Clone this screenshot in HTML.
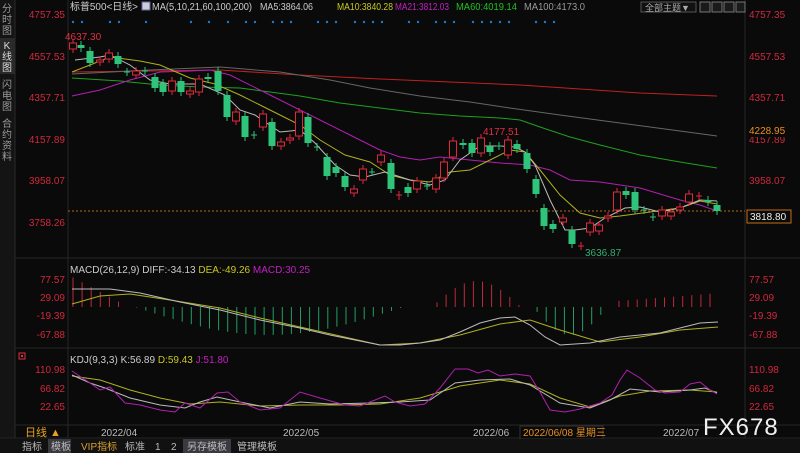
<!DOCTYPE html>
<html><head><meta charset="utf-8"><style>
html,body{margin:0;padding:0;background:#0a0a0a;}
body{width:800px;height:453px;overflow:hidden;position:relative;font-family:"Liberation Sans","Noto Sans CJK SC",sans-serif;}
svg{position:absolute;left:0;top:0;}
</style></head><body>
<svg id="s" width="800" height="453" xmlns="http://www.w3.org/2000/svg" font-family="Liberation Sans, Noto Sans CJK SC, sans-serif">
<rect width="800" height="453" fill="#0a0a0a"/>
<rect x="0" y="0" width="15" height="438" fill="#141414"/>
<rect x="0" y="38" width="15" height="36" fill="#2a2a2a"/>
<line x1="15" y1="0" x2="15" y2="438" stroke="#2a2a2a"/>
<g fill="#9a9a9a" font-size="10" text-anchor="middle">
<text x="7" y="12">分</text><text x="7" y="23">时</text><text x="7" y="34">图</text>
<text x="7" y="49" fill="#ddd">K</text><text x="7" y="60" fill="#ddd">线</text><text x="7" y="71" fill="#ddd">图</text>
<text x="7" y="88">闪</text><text x="7" y="99">电</text><text x="7" y="110">图</text>
<text x="7" y="127">合</text><text x="7" y="138">约</text><text x="7" y="149">资</text><text x="7" y="160">料</text>
</g>
<g stroke="#262626">
<line x1="68" y1="0" x2="68" y2="438"/>
<line x1="745" y1="0" x2="745" y2="438"/>
<line x1="15" y1="258" x2="800" y2="258"/>
<line x1="15" y1="348" x2="800" y2="348"/>
<line x1="15" y1="425" x2="800" y2="425"/>
<line x1="0" y1="438" x2="800" y2="438"/>
</g>
<g font-size="10">
<text x="70" y="10" fill="#ccc" textLength="68" lengthAdjust="spacingAndGlyphs">标普500&lt;日线&gt;</text>
<rect x="142" y="2" width="8" height="8" fill="#ccd" stroke="#669"/>
<text x="152" y="10" fill="#ccc" textLength="100" lengthAdjust="spacingAndGlyphs">MA(5,10,21,60,100,200)</text>
<text x="260" y="10" fill="#ccc" textLength="53" lengthAdjust="spacingAndGlyphs">MA5:3864.06</text>
<text x="337" y="10" fill="#c8c820" textLength="56" lengthAdjust="spacingAndGlyphs">MA10:3840.28</text>
<text x="395" y="10" fill="#c020c0" textLength="54" lengthAdjust="spacingAndGlyphs">MA21:3812.03</text>
<text x="456" y="10" fill="#20c020" textLength="61" lengthAdjust="spacingAndGlyphs">MA60:4019.14</text>
<text x="524" y="10" fill="#999" textLength="61" lengthAdjust="spacingAndGlyphs">MA100:4173.0</text>
</g>
<rect x="641" y="2" width="55" height="10" fill="#111" stroke="#555"/>
<text x="645" y="11" font-size="9" fill="#aaa">全部主题▼</text>
<g stroke="#777" fill="#1a1a1a"><rect x="700" y="2" width="10" height="10"/><rect x="712" y="2" width="10" height="10"/><rect x="724" y="2" width="10" height="10"/><rect x="736" y="2" width="9" height="10"/></g>
<g font-size="10" fill="#d0283c" text-anchor="end">
<text x="65" y="18">4757.35</text><text x="65" y="60">4557.53</text><text x="65" y="101">4357.71</text><text x="65" y="143">4157.89</text><text x="65" y="184">3958.07</text><text x="65" y="226">3758.26</text>
<text x="65" y="283">77.57</text><text x="65" y="301">29.09</text><text x="65" y="319">-19.39</text><text x="65" y="338">-67.88</text>
<text x="65" y="373">110.98</text><text x="65" y="392">66.82</text><text x="65" y="410">22.65</text>
</g>
<g font-size="10" fill="#d0283c">
<text x="749" y="18">4757.35</text><text x="749" y="60">4557.53</text><text x="749" y="101">4357.71</text><text x="749" y="143">4157.89</text><text x="749" y="184">3958.07</text>
<text x="749" y="283">77.57</text><text x="749" y="301">29.09</text><text x="749" y="319">-19.39</text><text x="749" y="338">-67.88</text>
<text x="749" y="373">110.98</text><text x="749" y="392">66.82</text><text x="749" y="410">22.65</text>
</g>
<rect x="747" y="124" width="44" height="13" fill="#0a0a0a"/>
<text x="749" y="134" font-size="10" fill="#e89020">4228.95</text>
<rect x="747" y="210" width="44" height="13" fill="#0a0a0a" stroke="#c07018"/>
<text x="750" y="220" font-size="10" fill="#f0f0f0">3818.80</text>
<line x1="68" y1="211" x2="745" y2="211" stroke="#b06818" stroke-dasharray="2,2"/>
<g id="dots" fill="#1e7ad0"></g>
<g id="ma" fill="none" stroke-width="1"></g>
<g id="cdl"></g>
<text x="65" y="40" font-size="10" fill="#e03040">4637.30</text>
<text x="483" y="135" font-size="10" fill="#e03040">4177.51</text>
<text x="585" y="256" font-size="10" fill="#30b070">3636.87</text>
<text x="70" y="273" font-size="10" fill="#ccc">MACD(26,12,9) DIFF:-34.13 <tspan fill="#c8c820">DEA:-49.26</tspan> <tspan fill="#c020c0">MACD:30.25</tspan></text>
<g id="macd"></g>
<rect x="19" y="353" width="6" height="6" fill="none" stroke="#e03040"/><rect x="21" y="355" width="2" height="2" fill="#e03040"/>
<text x="70" y="363" font-size="10" fill="#ccc">KDJ(9,3,3) K:56.89 <tspan fill="#c8c820">D:59.43</tspan> <tspan fill="#c020c0">J:51.80</tspan></text>
<g id="kdj" fill="none"></g>
<text x="25" y="436" font-size="11" fill="#e8a020">日线 ▲</text>
<g font-size="10" fill="#bbb"><text x="101" y="436">2022/04</text><text x="283" y="436">2022/05</text><text x="473" y="436">2022/06</text><text x="663" y="436">2022/07</text></g>
<rect x="520" y="426" width="83" height="13" fill="#0a0a0a" stroke="#333"/>
<text x="523" y="436" font-size="10" fill="#e89020">2022/06/08 星期三</text>
<text x="703" y="435" font-size="24" fill="#f0f0f0" letter-spacing="1">FX678</text>
<rect x="0" y="439" width="800" height="14" fill="#111"/>
<rect x="48" y="439" width="23" height="14" fill="#3a3a40"/>
<rect x="183" y="439" width="48" height="14" fill="#3a3a40"/>
<g font-size="10" fill="#bbb"><text x="22" y="450">指标</text><text x="51" y="450">模板</text><text x="81" y="450" fill="#d8a030">VIP指标</text><text x="125" y="450">标准</text><text x="155" y="450">1</text><text x="171" y="450">2</text><text x="187" y="450">另存模板</text><text x="237" y="450">管理模板</text></g>
</svg>
<script>
var NS="http://www.w3.org/2000/svg";
function el(p,t,a){var e=document.createElementNS(NS,t);for(var k in a)e.setAttribute(k,a[k]);document.getElementById(p).appendChild(e);return e;}
[73,82,110,119,146,191,209,228,246,255,273,282,291,318,327,336,355,364,373,382,409,418,436,445,454,473,482,491,500,509,536,545,554].forEach(function(x){el("dots","circle",{cx:x,cy:22,r:1.2});});
function pl(g,c,pts,w){el(g,"polyline",{points:pts,stroke:c,"stroke-width":w||1,fill:"none"});}
pl("ma","#c02020","72,72 150,71 220,70 300,75 380,79 450,82 520,85 580,89 640,93 717,96");
pl("ma","#666","72,74 150,70 220,67 280,72 330,80 370,88 420,96 470,102 510,108 560,115 620,123 680,131 717,136");
pl("ma","#20a020","72,78 120,81 160,85 200,87 240,88 300,96 340,103 380,108 420,113 460,116 500,118 520,120 540,127 570,137 600,145 640,155 680,162 717,168");
pl("ma","#b020b0","72,96 100,90 130,80 160,72 190,71 210,70 230,75 260,90 290,105 320,120 350,135 380,150 400,157 420,160 440,157 470,160 500,163 530,165 550,170 570,180 600,182 640,188 680,200 700,205 717,211");
pl("ma","#b0b020","72,72 90,65 110,57 140,61 160,65 190,78 215,84 240,95 260,105 280,115 300,125 320,140 345,155 370,162 390,175 410,180 430,182 450,172 470,170 490,160 510,150 525,152 540,170 560,195 580,213 600,218 620,216 650,212 680,208 700,201 717,204");
pl("ma","#bbb","75,60 100,57 110,55 130,65 150,80 170,84 200,84 225,95 240,110 255,115 265,122 280,132 300,130 315,143 335,165 350,175 365,177 385,172 410,180 430,185 445,180 460,160 480,146 500,146 515,147 525,152 535,165 550,200 565,230 575,230 590,228 605,218 625,208 640,207 660,212 680,208 700,200 717,201");
var C=[[73,43,49,'r'],[81,45,48,'g'],[90,51,63,'g'],[100,60,62,'r'],[109,53,59,'r'],[118,56,64,'g'],[127,72,72,'g'],[136,71,75,'r'],[145,71,71,'g'],[155,77,88,'g'],[163,83,92,'g'],[172,81,91,'r'],[181,81,92,'g'],[190,91,94,'r'],[199,79,92,'r'],[208,77,79,'g'],[218,71,91,'g'],[227,95,117,'g'],[236,112,121,'r'],[245,116,137,'g'],[254,135,135,'g'],[263,114,127,'r'],[272,122,146,'g'],[281,142,146,'r'],[290,138,140,'r'],[299,112,136,'r'],[308,117,143,'g'],[317,147,147,'g'],[327,157,176,'g'],[336,167,173,'g'],[345,176,187,'g'],[354,189,193,'r'],[363,169,180,'r'],[372,172,172,'g'],[381,155,162,'r'],[391,163,189,'g'],[399,195,196,'r'],[408,187,193,'g'],[417,181,189,'r'],[427,186,186,'g'],[436,178,189,'r'],[444,162,178,'r'],[453,141,157,'r'],[463,143,145,'g'],[472,143,153,'g'],[481,138,153,'r'],[490,146,152,'g'],[499,146,146,'g'],[508,140,155,'r'],[517,144,149,'g'],[527,153,169,'g'],[536,179,194,'g'],[544,208,226,'g'],[553,224,229,'g'],[563,218,222,'r'],[572,230,244,'g'],[581,246,246,'r'],[590,223,232,'r'],[599,225,231,'r'],[608,216,218,'r'],[617,192,210,'r'],[626,191,195,'g'],[635,192,210,'g'],[644,210,210,'g'],[653,217,217,'g'],[662,210,216,'r'],[671,212,216,'r'],[680,207,210,'r'],[689,194,202,'r'],[699,196,196,'r'],[708,200,202,'g'],[717,205,211,'g']];
C.forEach(function(c){var col=c[3]=='r'?'#e0283c':'#2ec47a';
el("cdl","line",{x1:c[0],x2:c[0],y1:c[1]-4,y2:c[2]+4,stroke:col});
if(c[2]-c[1]<2){el("cdl","line",{x1:c[0]-3,x2:c[0]+3,y1:c[1],y2:c[1],stroke:col});}
else if(c[3]=='r'){el("cdl","rect",{x:c[0]-3.5,y:c[1],width:7,height:c[2]-c[1],fill:"#0a0a0a",stroke:col});}
else{el("cdl","rect",{x:c[0]-3.5,y:c[1],width:7,height:c[2]-c[1],fill:col});}});
function h(x){var segs=[[72,125,-28,-8],[135,430,6,28],[432,530,-8,-26],[533,615,6,28],[618,720,-10,-14]];
for(var i=0;i<segs.length;i++){var s=segs[i];if(x>=s[0]&&x<=s[1]){var t=(x-s[0])/(s[1]-s[0]);var v=Math.sin(Math.PI*Math.min(1,t*1.1))*s[3];if(s[2]<0&&i==0)v=s[2]*(1-t)+-2;if(i==4)v=-6-8*t;return v;}}return 0;}
for(var x=73;x<=718;x+=9.1){var v=h(x);if(Math.abs(v)<0.5)continue;el("macd","line",{x1:x,x2:x,y1:307,y2:307+v,stroke:v<0?'#c0283a':'#20a060'});}
pl("macd","#b0b020","72,304 100,296 130,294 170,300 220,308 260,318 300,327 340,336 380,345 420,343 460,335 500,324 530,320 560,330 600,342 640,337 680,330 718,327");
pl("macd","#bbb","72,289 110,289 140,293 180,302 220,310 260,320 300,328 330,335 350,339 380,345 400,345 420,343 440,340 460,332 480,323 500,318 515,317 530,325 545,337 560,345 590,343 620,337 660,333 700,323 718,322");
pl("kdj","#b0b020","72,376 100,380 130,390 160,398 190,404 220,402 260,406 300,405 340,405 380,404 420,398 460,386 500,380 530,384 560,398 590,407 620,396 650,391 690,390 717,392");
pl("kdj","#bbb","72,375 90,383 105,388 130,398 160,405 185,408 200,402 217,397 240,402 270,408 300,402 330,404 370,403 400,402 430,400 455,383 480,380 510,379 530,385 560,403 590,408 610,400 630,389 660,392 690,390 705,388 717,393");
pl("kdj","#b020b0","72,371 90,383 100,390 110,387 125,403 140,405 160,410 175,412 185,403 200,408 217,393 228,392 240,402 260,410 280,408 300,392 320,398 345,405 360,406 375,400 385,396 395,402 410,406 425,404 440,388 455,369 468,369 478,373 488,370 500,376 515,374 530,376 540,392 550,410 565,412 580,409 600,403 612,395 620,380 627,370 640,378 655,390 665,393 680,392 690,384 700,382 710,390 717,394");
</script>
</body></html>
